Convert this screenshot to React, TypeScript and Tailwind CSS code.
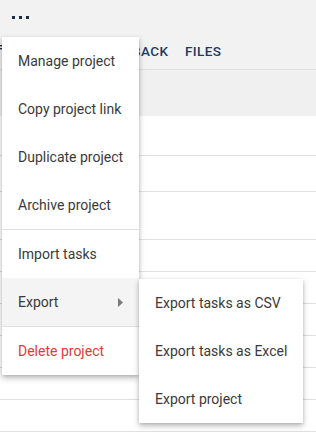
import React from "react";

const font = { fontFamily: "Roboto, 'Liberation Sans', sans-serif" };

export default function App() {
  const rowHeights = [40, 36, 48, 32, 32, 32, 32, 32, 32, 32];
  return (
    <div className="relative w-[316px] h-[437px] overflow-hidden bg-white" style={font}>
      {/* top bar */}
      <div className="h-[34px] bg-[#f2f2f2] flex items-center pl-[12px] gap-[4px] pt-[1px]">
        <span className="w-[3px] h-[3px] bg-[#1b2b40]" />
        <span className="w-[3px] h-[3px] bg-[#1b2b40]" />
        <span className="w-[3px] h-[3px] bg-[#1b2b40]" />
      </div>
      {/* tabs */}
      <div className="h-[36px] bg-[#f2f2f2] border-b border-[#dedede] flex items-center text-[13.5px] font-medium tracking-[0.4px] text-[#1e3a60]">
        <svg width="10" height="10" viewBox="0 0 10 10" className="ml-[-8px] mr-[97px] mt-[-8px] shrink-0">
          <rect x="0" y="2" width="10" height="1.4" fill="#1e3556" />
          <rect x="0" y="5" width="10" height="1.4" fill="#1e3556" />
        </svg>
        <span className="w-[66px] shrink-0 text-right mr-[20px]">FEEDBACK</span>
        <span>FILES</span>
      </div>
      {/* gray sub bar */}
      <div className="h-[46px] bg-[#f0f0f0]" />
      {/* rows */}
      <div className="flex flex-col">
        {rowHeights.map((h, i) => (
          <div key={i} className="border-b border-[#e0e0e0]" style={{ height: h }} />
        ))}
      </div>

      {/* main menu */}
      <div className="absolute left-[2px] top-[37px] w-[137px] bg-white shadow-[0_3px_6px_rgba(0,0,0,0.25),0_1px_3px_rgba(0,0,0,0.12)] text-[14px] text-[#3a3a3a]">
        {["Manage project", "Copy project link", "Duplicate project", "Archive project"].map((t) => (
          <div key={t} className="h-[48px] flex items-center pl-[16px]">{t}</div>
        ))}
        <div className="h-[1px] bg-[#e0e0e0]" />
        <div className="h-[48px] flex items-center pl-[16px]">Import tasks</div>
        <div className="h-[48px] flex items-center pl-[16px] pr-[16px] bg-[#f4f4f4] justify-between">
          <span>Export</span>
          <svg width="5" height="9" viewBox="0 0 5 9">
            <path d="M0 0 L5 4.5 L0 9 Z" fill="#7a7a7a" />
          </svg>
        </div>
        <div className="h-[1px] bg-[#e0e0e0]" />
        <div className="h-[48px] flex items-center pl-[16px] text-[#e53935]">Delete project</div>
      </div>

      {/* submenu */}
      <div className="absolute left-[139px] top-[279px] w-[164px] bg-white shadow-[0_3px_6px_rgba(0,0,0,0.25),0_1px_3px_rgba(0,0,0,0.12)] text-[14px] text-[#3a3a3a]">
        {["Export tasks as CSV", "Export tasks as Excel", "Export project"].map((t) => (
          <div key={t} className="h-[48px] flex items-center pl-[16px]">{t}</div>
        ))}
      </div>
    </div>
  );
}
